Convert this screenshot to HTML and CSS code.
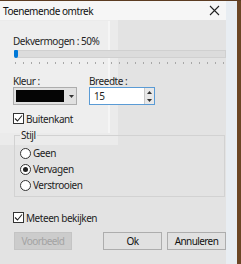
FILE: index.html
```html
<!DOCTYPE html>
<html lang="nl">
<head>
    <meta charset="UTF-8">
    <title>Toenemende omtrek</title>
    <link rel="stylesheet" href="styles.css">
</head>
<body>

<div class="screen">
    <!-- Dialog window -->
    <div class="window">
        <!-- ghosted window left over in the capture -->
        <div class="ghost ghost-outer"></div>
        <div class="ghost ghost-inner"></div>

        <div class="title-bar">
            <span class="title">Toenemende omtrek</span>
            <svg class="close" width="11" height="11" viewBox="0 0 11 11">
                <path d="M1 1 L10 10 M10 1 L1 10" stroke="#222" stroke-width="1.1" fill="none"/>
            </svg>
        </div>

        <div class="content">
            <div class="label">Dekvermogen : 50%</div>
            <div class="slider">
                <div class="track"></div>
                <div class="thumb"></div>
            </div>
            <div class="ticks"></div>

            <div class="fields">
                <div class="field">
                    <div class="label">Kleur :</div>
                    <div class="combo">
                        <div class="swatch"></div>
                        <div class="drop">
                            <svg width="5" height="3" viewBox="0 0 5 3"><path d="M0 0 H5 L2.5 3 Z" fill="#333"/></svg>
                        </div>
                    </div>
                </div>
                <div class="field">
                    <div class="label">Breedte :</div>
                    <div class="spin">
                        <span class="spin-value">15</span>
                        <div class="spin-buttons">
                            <div class="spin-btn">
                                <svg width="5" height="3" viewBox="0 0 5 3"><path d="M0 3 H5 L2.5 0 Z" fill="#333"/></svg>
                            </div>
                            <div class="spin-btn">
                                <svg width="5" height="3" viewBox="0 0 5 3"><path d="M0 0 H5 L2.5 3 Z" fill="#333"/></svg>
                            </div>
                        </div>
                    </div>
                </div>
            </div>

            <label class="check check-outer">
                <span class="box">
                    <svg width="9" height="9" viewBox="0 0 9 9"><path d="M1 4.5 L3.5 7 L8 1.5" stroke="#222" stroke-width="1.1" fill="none"/></svg>
                </span>
                Buitenkant
            </label>

            <fieldset class="group">
                <legend>Stijl</legend>
                <div class="radio"><span class="dot"></span>Geen</div>
                <div class="radio"><span class="dot checked"></span>Vervagen</div>
                <div class="radio"><span class="dot"></span>Verstrooien</div>
            </fieldset>

            <label class="check check-live">
                <span class="box">
                    <svg width="9" height="9" viewBox="0 0 9 9"><path d="M1 4.5 L3.5 7 L8 1.5" stroke="#222" stroke-width="1.1" fill="none"/></svg>
                </span>
                Meteen bekijken
            </label>

            <div class="buttons">
                <button class="btn disabled">Voorbeeld</button>
                <div class="btn-right">
                    <button class="btn">Ok</button>
                    <button class="btn">Annuleren</button>
                </div>
            </div>
        </div>
    </div>
    <div class="desktop"></div>
</div>

</body>
</html>
```

FILE: styles.css
```css
body {
    margin: 0;
    font-family: 'Noto Sans', 'Open Sans', sans-serif;
    font-size: 10px;
    letter-spacing: -0.45px;
    color: #1e1e1e;
    background: #6b4a2a;
    overflow: hidden;
}

.screen {
    display: flex;
    width: 241px;
    height: 264px;
    border-top: 1px solid #5c3c22;
    box-sizing: border-box;
}

/* Dialog window */
.window {
    position: relative;
    width: 237px;
    background: #e3e3e3;
    border-right: 11px solid #e8edf2;
    box-sizing: border-box;
}

.desktop {
    flex: 1;
    background: #6b4626;
}

.title-bar {
    position: relative;
    display: flex;
    align-items: center;
    justify-content: space-between;
    height: 19px;
    padding: 0 6px 0 3px;
    background: #f6f6f6;
}

.title {
    color: #111;
}

/* Dialog content */
.content {
    position: relative;
    padding: 15px 0 0 13px;
}

.label {
    height: 13px;
    line-height: 13px;
}

.slider {
    position: relative;
    height: 10px;
    margin-top: 1px;
}

.track {
    height: 6px;
    margin: 2px 0 0 2px;
    background: #dcdcdc;
    border: 1px solid #d0d0d0;
}

.thumb {
    position: absolute;
    left: 1px;
    top: 0;
    width: 4px;
    height: 8px;
    background: #0078d7;
    border-radius: 1px 1px 2px 2px;
}

.ticks {
    height: 2px;
    margin: 2px 0 0 2px;
    background: repeating-linear-gradient(to right, #a8a8a8 0 1px, transparent 1px 8px);
}

.fields {
    display: flex;
    gap: 12px;
    margin-top: 11px;
}

.field .label {
    height: 12px;
    line-height: 12px;
}

.combo {
    display: flex;
    width: 64px;
    height: 18px;
    background: #e1e1e1;
    border: 1px solid #adadad;
    box-sizing: border-box;
}

.swatch {
    width: 48px;
    margin: 2px;
    background: #050505;
}

.drop {
    display: flex;
    flex: 1;
    align-items: center;
    justify-content: center;
}

.spin {
    display: flex;
    align-items: center;
    justify-content: space-between;
    width: 66px;
    height: 18px;
    padding-left: 4px;
    background: #fff;
    border: 1px solid #5a9bd5;
    box-sizing: border-box;
}

.spin-buttons {
    display: flex;
    flex-direction: column;
    width: 10px;
    height: 16px;
}

.spin-btn {
    display: flex;
    flex: 1;
    align-items: center;
    justify-content: center;
    background: #e8e8e8;
    border-left: 1px solid #c8c8c8;
}

.check {
    display: flex;
    align-items: center;
    gap: 2px;
    height: 13px;
}

.check-outer {
    margin-top: 7px;
}

.box {
    display: flex;
    align-items: center;
    justify-content: center;
    width: 11px;
    height: 11px;
    background: #fff;
    border: 1px solid #333;
    box-sizing: border-box;
}

.group {
    width: 211px;
    height: 67px;
    margin: 5px 0 0 1px;
    padding: 4px 0 0 5px;
    border: 1px solid #d2d2d2;
    box-sizing: border-box;
}

.group legend {
    padding: 0 1px;
    line-height: 11px;
}

.radio {
    display: flex;
    align-items: center;
    gap: 2px;
    height: 16px;
}

.dot {
    position: relative;
    width: 11px;
    height: 11px;
    background: #fff;
    border: 1px solid #333;
    border-radius: 50%;
    box-sizing: border-box;
}

.dot.checked::after {
    content: "";
    position: absolute;
    left: 2px;
    top: 2px;
    width: 5px;
    height: 5px;
    border-radius: 50%;
    background: #222;
}

.check-live {
    margin-top: 14px;
}

.buttons {
    display: flex;
    justify-content: space-between;
    width: 213px;
    margin-top: 8px;
}

.btn-right {
    display: flex;
    gap: 5px;
}

.btn {
    width: 59px;
    height: 18px;
    padding: 0;
    font: inherit;
    letter-spacing: -0.6px;
    color: #111;
    background: #e1e1e1;
    border: 1px solid #adadad;
}

.btn.disabled {
    width: 58px;
    margin-left: 1px;
    color: #a3a3a3;
    background: #cccccc;
    border-color: #c4c4c4;
}

/* Ghost overlays */
.ghost {
    position: absolute;
    left: 0;
}

.ghost-outer {
    top: 0;
    width: 118px;
    height: 144px;
    background: rgba(255, 255, 255, 0.3);
}

.ghost-inner {
    top: 20px;
    width: 108px;
    height: 112px;
    background: rgba(255, 255, 255, 0.15);
    border-right: 2px solid rgba(255, 255, 255, 0.4);
}
```
